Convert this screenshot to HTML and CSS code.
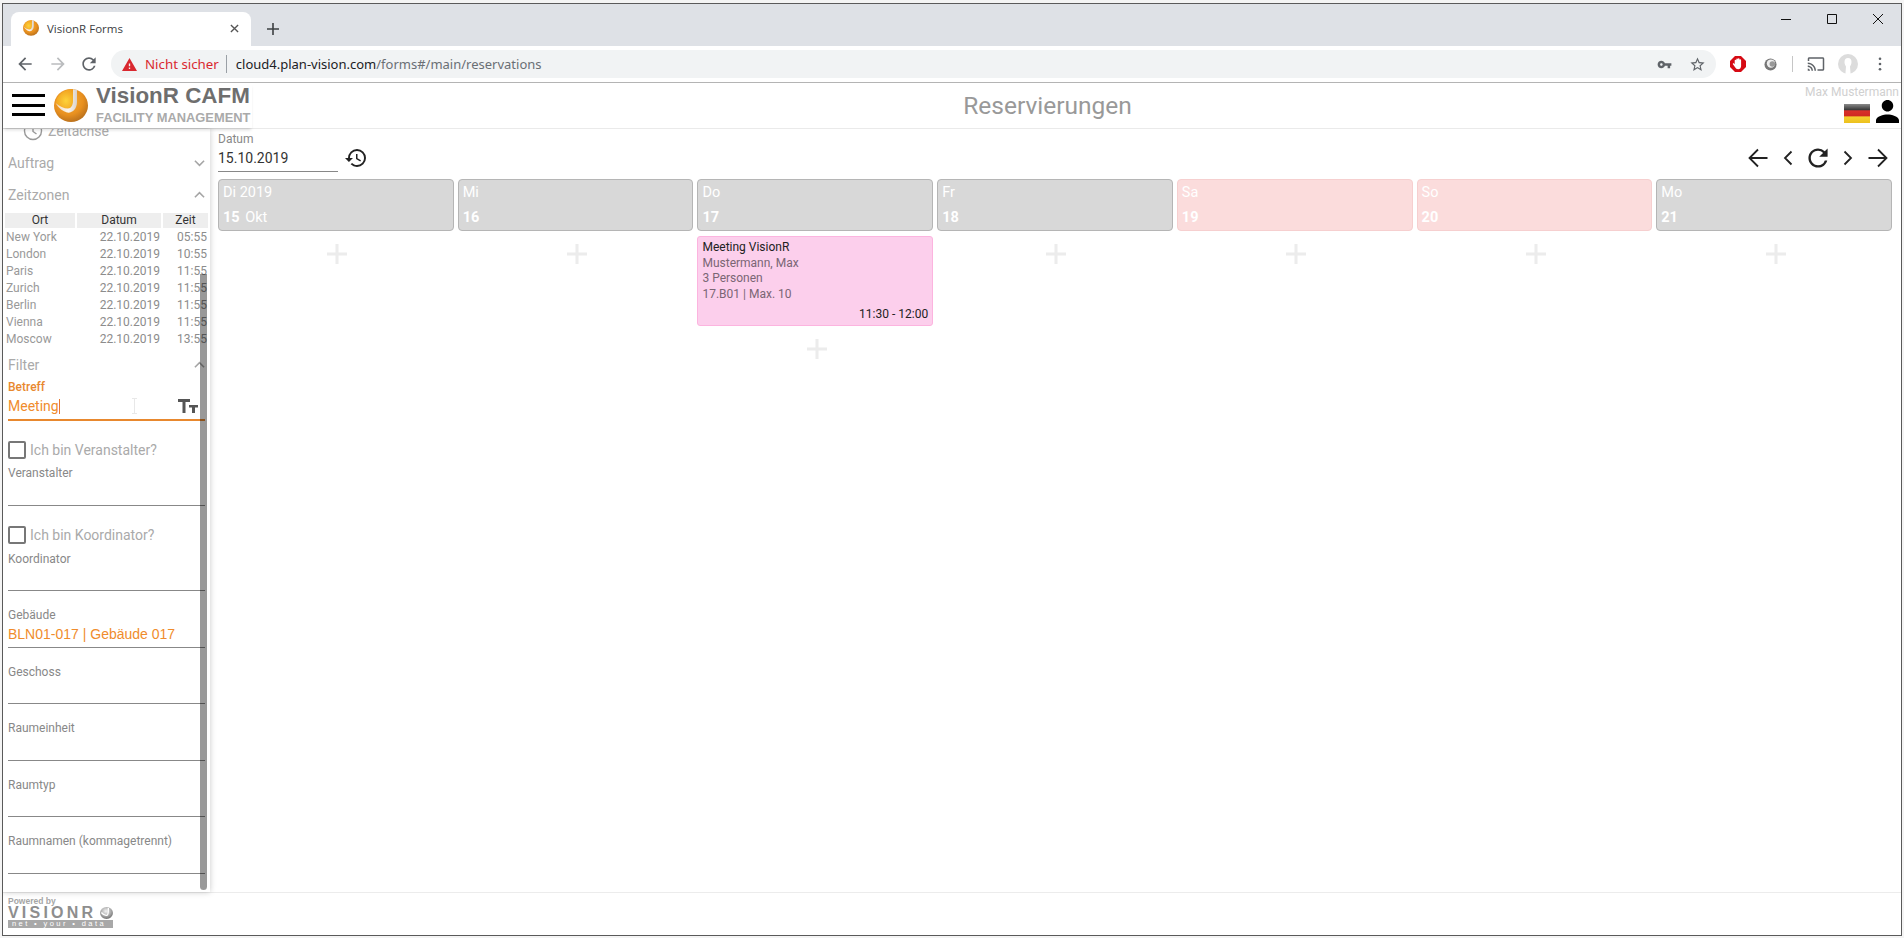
FILE: index.html
```html
<!DOCTYPE html>
<html lang="de">
<head>
<meta charset="utf-8">
<title>VisionR Forms</title>
<link rel="stylesheet" href="styles.css">
</head>
<body>
<svg class="defs" aria-hidden="true">
  <defs>
    <radialGradient id="ball" cx="42%" cy="35%" r="72%">
      <stop offset="0" stop-color="#f7b03a"/>
      <stop offset=".6" stop-color="#e8901f"/>
      <stop offset="1" stop-color="#b06a1c"/>
    </radialGradient>
    <radialGradient id="wedge" cx="60%" cy="60%" r="70%">
      <stop offset="0" stop-color="#fdd23a"/>
      <stop offset="1" stop-color="#f09a1c"/>
    </radialGradient>
    <linearGradient id="swoosh" x1="0" y1="0" x2="1" y2="0">
      <stop offset="0" stop-color="#f3d9b8"/>
      <stop offset=".6" stop-color="#fbf6ef"/>
      <stop offset="1" stop-color="#d9d2cc"/>
    </linearGradient>
    <radialGradient id="grayball" cx="45%" cy="35%" r="70%">
      <stop offset="0" stop-color="#f2f2f2"/>
      <stop offset=".6" stop-color="#a5a5a5"/>
      <stop offset="1" stop-color="#666"/>
    </radialGradient>
    <linearGradient id="flag" x1="0" y1="0" x2="0" y2="1">
      <stop offset="0" stop-color="#8a8a8a"/>
      <stop offset=".3" stop-color="#3a3a3a"/>
      <stop offset=".36" stop-color="#d9302a"/>
      <stop offset=".62" stop-color="#cf2a22"/>
      <stop offset=".68" stop-color="#f5cf2e"/>
      <stop offset="1" stop-color="#ecc01e"/>
    </linearGradient>
    <symbol id="logo" viewBox="0 0 34 33">
      <ellipse cx="17" cy="16.500" rx="17" ry="16.500" fill="url(#ball)"/>
      <path d="M19 .2C10 0 3 6 1.500 14c4 3.500 8.500 5.500 12.500 5.500 3 0 5-3.500 5-7.500z" fill="url(#wedge)"/>
      <path d="M19 .2L23 .8V13c0 7-5 11.500-10 10.500C9 22.500 5 19.500 1.500 14c4 3.500 8.500 5.500 12.500 5.500 3 0 5-3.500 5-7.500z" fill="url(#swoosh)"/>
    </symbol>
  </defs>
</svg>
<div class="frame">
  <div class="tabstrip">
    <div class="tab">
      <svg class="favicon"><use href="#logo"/></svg>
      <span class="tab-title">VisionR Forms</span>
      <svg class="tab-close" viewBox="0 0 10 10"><path d="M1 1l8 8M9 1l-8 8"/></svg>
    </div>
    <svg class="newtab" viewBox="0 0 12 12"><path d="M6 0v12M0 6h12"/></svg>
    <div class="winctrls">
      <svg class="win" viewBox="0 0 12 12"><path d="M1 6.500h10"/></svg>
      <svg class="win" viewBox="0 0 12 12"><path d="M1.500 1.500h9v9h-9z"/></svg>
      <svg class="win" viewBox="0 0 12 12"><path d="M1 1l10 10M11 1L1 11"/></svg>
    </div>
  </div>
  <div class="toolbar">
    <svg class="tb tb-dark" viewBox="0 0 24 24"><path d="M20 11H7.830l5.590-5.590L12 4l-8 8 8 8 1.410-1.410L7.830 13H20v-2z"/></svg>
    <svg class="tb tb-light" viewBox="0 0 24 24"><path d="M12 4l-1.410 1.410L16.170 11H4v2h12.170l-5.580 5.590L12 20l8-8z"/></svg>
    <svg class="tb tb-dark tb-reload" viewBox="0 0 24 24"><path d="M17.650 6.350A7.958 7.958 0 0 0 12 4c-4.420 0-7.990 3.580-7.990 8s3.570 8 7.990 8c3.730 0 6.840-2.550 7.730-6h-2.080A5.990 5.990 0 0 1 12 18c-3.310 0-6-2.690-6-6s2.690-6 6-6c1.660 0 3.140.690 4.220 1.780L13 11h7V4l-2.350 2.350z"/></svg>
    <div class="omnibox">
      <svg class="warn" viewBox="1 2 22 19"><path d="M1 21h22L12 2 1 21zm12-3h-2v-2h2v2zm0-4h-2v-4h2v4z"/></svg>
      <span class="notsecure">Nicht sicher</span>
      <span class="omni-sep"></span>
      <span class="url"><span class="url-host">cloud4.plan-vision.com</span>/forms#/main/reservations</span>
      <svg class="omni-key" viewBox="0 0 24 24"><path d="M12.650 10C11.830 7.670 9.610 6 7 6c-3.310 0-6 2.690-6 6s2.690 6 6 6c2.610 0 4.830-1.670 5.650-4H17v4h4v-4h2v-4H12.650zM7 14c-1.100 0-2-.9-2-2s.9-2 2-2 2 .9 2 2-.9 2-2 2z"/></svg>
      <svg class="omni-star" viewBox="0 0 24 24"><path d="M22 9.240l-7.190-.62L12 2 9.190 8.630 2 9.240l5.460 4.730L5.820 21 12 17.270 18.180 21l-1.630-7.030L22 9.240zM12 15.400l-3.760 2.270 1-4.280-3.320-2.880 4.380-.38L12 6.100l1.710 4.040 4.380.38-3.320 2.880 1 4.280L12 15.400z"/></svg>
    </div>
    <svg class="ext-block" viewBox="0 0 16 16">
      <path d="M5 0h6l5 5v6l-5 5H5l-5-5V5z" fill="#d60b14"/>
      <path d="M4.700 4.500a.8.800 0 0 1 1.600 0V3.300a.8.800 0 0 1 1.600 0v-.3a.8.800 0 0 1 1.600 0v1a.8.800 0 0 1 1.600 0v6c0 2-1.300 3.300-3 3.300-1.500 0-2.300-.7-3-2L2.900 8.300c-.4-.8.600-1.400 1.200-.8l.6.800z" fill="#fff"/>
    </svg>
    <svg class="ext-ball" viewBox="0 0 14 14"><circle cx="7" cy="7" r="6.500" fill="#777"/><circle cx="7.500" cy="6" r="4.500" fill="#eee"/><circle cx="9" cy="6.500" r="3" fill="#999"/></svg>
    <span class="tb-sep"></span>
    <svg class="cast" viewBox="0 0 24 24"><path d="M21 3H3c-1.100 0-2 .9-2 2v3h2V5h18v14h-7v2h7c1.100 0 2-.9 2-2V5c0-1.100-.9-2-2-2zM1 18v3h3c0-1.660-1.340-3-3-3zm0-4v2c2.760 0 5 2.240 5 5h2c0-3.870-3.130-7-7-7zm0-4v2c4.970 0 9 4.030 9 9h2c0-6.080-4.930-11-11-11z"/></svg>
    <svg class="avatar" viewBox="0 0 20 20"><circle cx="10" cy="10" r="10" fill="#dcdcdc"/><path d="M6.500 8a3.500 4 0 0 1 7 0c0 2-1 3.500-1.500 4.500 0 1.500.5 4 .5 7.500h-5c0-3.500.5-6 .5-7.500C7.500 11.500 6.500 10 6.500 8z" fill="#fff"/></svg>
    <svg class="dots" viewBox="0 0 4 16"><circle cx="2" cy="2" r="1.500"/><circle cx="2" cy="8" r="1.500"/><circle cx="2" cy="14" r="1.500"/></svg>
  </div>

  <header class="apphead">
    <div class="brand">
      <div class="burger"><span></span><span></span><span></span></div>
      <svg class="brand-logo"><use href="#logo"/></svg>
      <div class="brand-text">
        <div class="brand-name">VisionR CAFM</div>
        <div class="brand-sub">FACILITY MANAGEMENT</div>
      </div>
    </div>
    <div class="page-title">Reservierungen</div>
    <div class="user">
      <div class="user-name">Max Mustermann</div>
      <div class="user-icons">
        <svg class="flag" viewBox="0 0 26 19"><rect width="26" height="19" fill="url(#flag)"/></svg>
        <svg class="person" viewBox="4 4 16 16" preserveAspectRatio="none"><path d="M12 12c2.210 0 4-1.790 4-4s-1.790-4-4-4-4 1.790-4 4 1.790 4 4 4zm0 2c-2.670 0-8 1.340-8 4v2h16v-2c0-2.660-5.330-4-8-4z"/></svg>
      </div>
    </div>
  </header>

  <div class="main">
    <aside class="side">
      <div class="timeline">
        <svg class="clock" viewBox="0 0 20 20"><circle cx="10" cy="10" r="8.500"/><path d="M10 5v5.500l3.500 2.500"/></svg>
        <span>Zeitachse</span>
      </div>
      <div class="sec-head"><span>Auftrag</span><svg class="chev" viewBox="0 0 12 8"><path d="M1 1.500l5 5 5-5"/></svg></div>
      <div class="sec-head"><span>Zeitzonen</span><svg class="chev" viewBox="0 0 12 8"><path d="M1 6.500l5-5 5 5"/></svg></div>
      <div class="tz">
        <div class="tz-h">Ort</div><div class="tz-h">Datum</div><div class="tz-h">Zeit</div>
        <div class="tz-c">New York</div><div class="tz-d">22.10.2019</div><div class="tz-t">05:55</div>
        <div class="tz-c">London</div><div class="tz-d">22.10.2019</div><div class="tz-t">10:55</div>
        <div class="tz-c">Paris</div><div class="tz-d">22.10.2019</div><div class="tz-t">11:55</div>
        <div class="tz-c">Zurich</div><div class="tz-d">22.10.2019</div><div class="tz-t">11:55</div>
        <div class="tz-c">Berlin</div><div class="tz-d">22.10.2019</div><div class="tz-t">11:55</div>
        <div class="tz-c">Vienna</div><div class="tz-d">22.10.2019</div><div class="tz-t">11:55</div>
        <div class="tz-c">Moscow</div><div class="tz-d">22.10.2019</div><div class="tz-t">13:55</div>
      </div>
      <div class="sec-head"><span>Filter</span><svg class="chev" viewBox="0 0 12 8"><path d="M1 6.500l5-5 5 5"/></svg></div>
      <div class="active-field">
        <div class="active-label">Betreff</div>
        <div class="active-value"><span>Meeting</span><i class="caret"></i>
          <svg class="ibeam" viewBox="0 0 7 16"><path d="M1 .5h5M3.500.5v15M1 15.500h5"/></svg>
          <svg class="tt" viewBox="0 0 20 14"><path d="M0 0h12v3H7.500v11h-3V3H0zM11 6h9v2.500h-3V14h-3V8.500h-3z"/></svg>
        </div>
      </div>
      <label class="check"><span class="box"></span><span>Ich bin Veranstalter?</span></label>
      <div class="field field-first"><div class="f-label">Veranstalter</div><div class="f-value"></div></div>
      <label class="check"><span class="box"></span><span>Ich bin Koordinator?</span></label>
      <div class="field field-second"><div class="f-label">Koordinator</div><div class="f-value"></div></div>
      <div class="field"><div class="f-label">Gebäude</div><div class="f-value f-value-tall f-filled">BLN01-017 | Gebäude 017</div></div>
      <div class="field"><div class="f-label">Geschoss</div><div class="f-value"></div></div>
      <div class="field"><div class="f-label">Raumeinheit</div><div class="f-value f-value-tall"></div></div>
      <div class="field"><div class="f-label">Raumtyp</div><div class="f-value"></div></div>
      <div class="field"><div class="f-label">Raumnamen (kommagetrennt)</div><div class="f-value f-value-tall"></div></div>
      <div class="scrollthumb"></div>
    </aside>

    <section class="cal">
      <div class="cal-top">
        <div class="date-field">
          <div class="date-label">Datum</div>
          <div class="date-value">15.10.2019</div>
        </div>
        <svg class="history" viewBox="1 3 21 18"><path d="M13 3a9 9 0 0 0-9 9H1l3.890 3.890.07.14L9 12H6c0-3.870 3.130-7 7-7s7 3.130 7 7-3.130 7-7 7c-1.930 0-3.680-.79-4.940-2.060l-1.420 1.420A8.954 8.954 0 0 0 13 21a9 9 0 0 0 0-18zm-1 5v5l4.280 2.540.72-1.210-3.500-2.080V8H12z"/></svg>
        <div class="cal-nav">
          <svg class="nav-a" viewBox="0 0 20 20"><path d="M19.500 10H1.500M10 1.500L1.500 10l8.500 8.500"/></svg>
          <svg class="nav-c" viewBox="0 0 10 16"><path d="M8.500 1.500L2 8l6.500 6.500"/></svg>
          <svg class="nav-r" viewBox="4 2 16 20"><path d="M17.650 6.350A7.958 7.958 0 0 0 12 4c-4.420 0-7.990 3.580-7.990 8s3.570 8 7.990 8c3.730 0 6.840-2.550 7.730-6h-2.080A5.990 5.990 0 0 1 12 18c-3.310 0-6-2.690-6-6s2.690-6 6-6c1.660 0 3.140.690 4.220 1.780L13 11h7V4l-2.350 2.350z"/></svg>
          <svg class="nav-c" viewBox="0 0 10 16"><path d="M1.500 1.500L8 8l-6.500 6.500"/></svg>
          <svg class="nav-a" viewBox="0 0 20 20"><path d="M.5 10h18M10 1.500l8.500 8.500-8.500 8.500"/></svg>
        </div>
      </div>
      <div class="days">
        <div class="day">
          <div class="day-head"><div class="dh-top">Di 2019</div><div class="dh-bot"><b>15</b> <span>Okt</span></div></div>
          <div class="add"><svg class="plus" viewBox="0 0 20 20"><path d="M10 0v20M0 10h20"/></svg></div>
        </div>
        <div class="day">
          <div class="day-head"><div class="dh-top">Mi</div><div class="dh-bot"><b>16</b></div></div>
          <div class="add"><svg class="plus" viewBox="0 0 20 20"><path d="M10 0v20M0 10h20"/></svg></div>
        </div>
        <div class="day">
          <div class="day-head"><div class="dh-top">Do</div><div class="dh-bot"><b>17</b></div></div>
          <div class="event">
            <div class="ev-title">Meeting VisionR</div>
            <div class="ev-line">Mustermann, Max</div>
            <div class="ev-line">3 Personen</div>
            <div class="ev-line">17.B01 | Max. 10</div>
            <div class="ev-time">11:30 - 12:00</div>
          </div>
          <div class="add"><svg class="plus" viewBox="0 0 20 20"><path d="M10 0v20M0 10h20"/></svg></div>
        </div>
        <div class="day">
          <div class="day-head"><div class="dh-top">Fr</div><div class="dh-bot"><b>18</b></div></div>
          <div class="add"><svg class="plus" viewBox="0 0 20 20"><path d="M10 0v20M0 10h20"/></svg></div>
        </div>
        <div class="day">
          <div class="day-head weekend"><div class="dh-top">Sa</div><div class="dh-bot"><b>19</b></div></div>
          <div class="add"><svg class="plus" viewBox="0 0 20 20"><path d="M10 0v20M0 10h20"/></svg></div>
        </div>
        <div class="day">
          <div class="day-head weekend"><div class="dh-top">So</div><div class="dh-bot"><b>20</b></div></div>
          <div class="add"><svg class="plus" viewBox="0 0 20 20"><path d="M10 0v20M0 10h20"/></svg></div>
        </div>
        <div class="day">
          <div class="day-head"><div class="dh-top">Mo</div><div class="dh-bot"><b>21</b></div></div>
          <div class="add"><svg class="plus" viewBox="0 0 20 20"><path d="M10 0v20M0 10h20"/></svg></div>
        </div>
      </div>
    </section>
  </div>

  <footer class="foot">
    <div class="powered">
      <div class="pw-by">Powered by</div>
      <div class="pw-name"><span>VISIONR</span><svg class="pw-ball" viewBox="0 0 14 13"><ellipse cx="7" cy="6.500" rx="7" ry="6.500" fill="url(#grayball)"/><path d="M1.500 6c2 2.500 4 3.500 6 3C9 9 9 6 9 1" fill="none" stroke="#fff" stroke-width="1.500"/></svg></div>
      <div class="pw-bar">net • your • data</div>
    </div>
  </footer>
</div>
</body>
</html>
```
FILE: styles.css
```css
* { box-sizing: border-box; }
html, body { margin: 0; padding: 0; height: 938px; overflow: hidden; background: #f4f4f4; }
body { font-family: Roboto, "Liberation Sans", sans-serif; }
.defs { position: absolute; width: 0; height: 0; }

.frame {
  margin: 3px 2px 0;
  width: 1900px;
  height: 933px;
  border: 1px solid #5a5a5a;
  background: #fff;
  display: flex;
  flex-direction: column;
  overflow: hidden;
}

/* browser chrome */
.tabstrip {
  height: 42px;
  flex: none;
  background: #dee1e6;
  display: flex;
  align-items: flex-end;
  padding-left: 8px;
}
.tab {
  width: 240px;
  height: 34px;
  background: #fff;
  border-radius: 8px 8px 0 0;
  display: flex;
  align-items: center;
  padding: 0 12px 2px 12px;
}
.favicon { width: 16px; height: 16px; flex: none; }
.tab-title { margin-left: 8px; font: 11.5px "Open Sans", sans-serif; color: #3c4043; flex: 1; white-space: nowrap; }
.tab-close { width: 9px; height: 9px; fill: none; stroke: #555; stroke-width: 1.5; }
.newtab { width: 12px; height: 12px; margin: 0 0 11px 16px; fill: none; stroke: #3c4043; stroke-width: 1.6; }
.winctrls { margin-left: auto; align-self: flex-start; display: flex; gap: 34px; padding: 9px 17px 0 0; }
.win { width: 12px; height: 12px; fill: none; stroke: #111; stroke-width: 1; }

.toolbar {
  height: 37px;
  flex: none;
  background: #fff;
  border-bottom: 1px solid #b4b4b4;
  display: flex;
  align-items: center;
  padding: 0 0 0 12px;
}
.tb { width: 20px; height: 20px; margin-right: 13px; flex: none; }
.tb-dark { fill: #5f6368; }
.tb-light { fill: #babcbe; }
.tb-reload { margin-left: -2px; margin-right: 15px; }
.omnibox {
  width: 1605px;
  height: 28px;
  margin-left: -3px;
  background: #f1f3f4;
  border-radius: 14px;
  display: flex;
  align-items: center;
  padding-left: 11px;
  font: 13px "Noto Sans", sans-serif;
  flex: none;
}
.warn { width: 15px; height: 13px; fill: #d9282f; flex: none; }
.notsecure { margin-left: 8px; color: #d9282f; font-size: 13.3px; }
.omni-sep { width: 1px; height: 18px; background: #9aa0a6; margin: 0 9px 0 7px; }
.url { color: #6a6f74; }
.url-host { color: #202124; }
.omni-key { width: 15px; height: 15px; fill: #5f6368; margin-left: auto; }
.omni-star { width: 17px; height: 17px; fill: #5f6368; margin: 0 10px 0 17px; }
.ext-block { width: 16px; height: 16px; margin-left: 14px; flex: none; }
.ext-ball { width: 13px; height: 13px; margin-left: 18px; flex: none; }
.tb-sep { width: 1px; height: 16px; background: #c6c6c6; margin-left: 15px; }
.cast { width: 18px; height: 18px; fill: #5f6368; margin-left: 14px; flex: none; }
.avatar { width: 20px; height: 20px; margin-left: 13px; flex: none; }
.dots { width: 4px; height: 14px; fill: #5f6368; margin-left: 20px; flex: none; }

/* application header */
.apphead {
  height: 46px;
  flex: none;
  display: flex;
  position: relative;
  border-bottom: 1px solid #eaeaea;
  background: #fff;
}
.brand {
  width: 249px;
  height: 45px;
  flex: none;
  display: flex;
  align-items: center;
  background: #fff;
  box-shadow: 0 3px 3px -1px rgba(0,0,0,.14);
  padding-left: 9px;
  z-index: 3;
}
.burger { width: 33px; height: 22px; display: flex; flex-direction: column; justify-content: space-between; flex: none; margin-top: -1px; }
.burger span { display: block; height: 3px; background: #000; }
.brand-logo { width: 34px; height: 33px; margin-left: 9px; flex: none; }
.brand-text { margin-left: 8px; color: #6e6e6e; font-family: "Liberation Sans", sans-serif; font-weight: 700; white-space: nowrap; }
.brand-name { font-size: 22.4px; line-height: 24px; margin-top: -3px; }
.brand-sub { font-size: 12.9px; line-height: 13px; color: #aaa; margin-top: 3px; }
.page-title {
  flex: 1;
  text-align: center;
  font: 24.5px/46px Roboto, sans-serif;
  color: #999;
  padding-left: 42px;
}
.user { width: 100px; flex: none; display: flex; flex-direction: column; align-items: flex-end; padding-right: 2px; }
.user-name { font-size: 12px; line-height: 15px; color: #d0d0d0; margin-top: 2px; white-space: nowrap; }
.user-icons { display: flex; align-items: flex-end; gap: 6px; }
.flag { width: 26px; height: 19px; }
.person { width: 23px; height: 23px; fill: #000; }

/* body */
.main { flex: 1; display: flex; min-height: 0; }
.side {
  width: 207px;
  flex: none;
  position: relative;
  background: #fff;
  padding: 0 5px;
  overflow: hidden;
  box-shadow: 0 0 6px rgba(0,0,0,.22);
  z-index: 2;
}
.timeline {
  height: 25px;
  margin-top: -8px;
  padding: 0 0 5px 15px;
  display: flex;
  align-items: center;
  font-size: 14px;
  color: #aaa;
  gap: 5px;
}
.clock { width: 20px; height: 20px; fill: none; stroke: #999; stroke-width: 1.4; }
.sec-head {
  height: 30px;
  margin-top: 2px;
  display: flex;
  align-items: center;
  justify-content: space-between;
  font-size: 14px;
  color: #aaa;
}
.chev { width: 11px; height: 8px; fill: none; stroke: #a5a5a5; stroke-width: 1.7; }
.tz {
  display: grid;
  grid-template-columns: 70px 84px 45px;
  grid-template-rows: 16px;
  grid-auto-rows: 17px;
  column-gap: 2px;
  margin: 3px -3px 0;
  font-size: 12px;
  line-height: 17px;
  color: #8c8c8c;
}
.tz-h { height: 15px; line-height: 15px; background: #eee; color: #333; text-align: center; }
.tz-c { padding-left: 1px; color: #999; white-space: nowrap; }
.tz-d { text-align: right; padding-right: 1px; }
.tz-t { text-align: right; padding-right: 1px; }
.active-field { height: 41px; }
.active-label { font-size: 12px; line-height: 14px; color: #e8882e; font-weight: 500; }
.active-value {
  height: 25px;
  margin-top: 2px;
  border-bottom: 2px solid #e8882e;
  font-size: 14px;
  line-height: 20px;
  color: #f08c2c;
  display: flex;
  align-items: flex-start;
}
.caret { width: 1px; height: 15px; background: #e8782e; margin-top: 3px; }
.ibeam { width: 7px; height: 16px; margin: 2px 0 0 71px; fill: none; stroke: #e8e8e8; stroke-width: 1; }
.tt { width: 20px; height: 14px; margin: 3px 7px 0 auto; fill: #555; }
.check {
  display: flex;
  align-items: center;
  height: 20px;
  margin-top: 19px;
  font-size: 14px;
  color: #aaa;
  gap: 4px;
}
.box { width: 18px; height: 18px; border: 2px solid #777; border-radius: 2px; flex: none; }
.field { margin-top: 17px; }
.field-first { margin-top: 6px; }
.field-second { margin-top: 7px; }
.f-label { font-size: 12px; line-height: 14px; color: #888; white-space: nowrap; }
.f-value {
  height: 25px;
  border-bottom: 1px solid #888;
  font: 14px/25px "Liberation Sans", sans-serif;
}
.f-value-tall { height: 26px; }
.field-first .f-value { height: 26px; }
.f-filled { color: #f08c2c; white-space: nowrap; }
.scrollthumb {
  position: absolute;
  left: 197px;
  top: 145px;
  width: 7px;
  height: 616px;
  background: rgba(0,0,0,.4);
  border-radius: 0 0 4px 4px;
}

/* calendar */
.cal { flex: 1; min-width: 0; padding: 0 9px 0 8px; }
.cal-top { height: 50px; display: flex; align-items: flex-start; }
.date-field { width: 120px; height: 40px; margin-top: 3px; border-bottom: 1px solid #888; }
.date-label { font-size: 12px; line-height: 14px; color: #888; }
.date-value { font-size: 14px; line-height: 18px; margin-top: 3px; color: #333; }
.history { width: 21px; height: 18px; margin: 20px 0 0 7px; fill: #222; }
.cal-nav { margin-left: auto; display: flex; align-items: center; height: 20px; margin-top: 19px; padding-right: 4px; gap: 15px; }
.nav-a { width: 20px; height: 20px; fill: none; stroke: #222; stroke-width: 1.8; }
.nav-c { width: 10px; height: 16px; fill: none; stroke: #222; stroke-width: 1.8; }
.nav-r { width: 20px; height: 24px; fill: #222; }
.days { display: grid; grid-template-columns: repeat(7, 1fr); column-gap: 4px; }
.day { min-width: 0; }
.day-head {
  height: 52px;
  background: #d8d8d8;
  border: 1px solid #b5b5b5;
  border-radius: 4px;
  color: #fff;
  padding: 1px 4px 0;
  font-size: 14.5px;
}
.day-head.weekend { background: #fbdcdc; border-color: #f6cfcf; }
.dh-top { line-height: 24px; }
.dh-bot { line-height: 26px; }
.dh-bot b { font-weight: 700; margin-right: 2px; }
.add { height: 46px; display: flex; align-items: center; justify-content: center; padding-left: 3px; }
.plus { width: 20px; height: 20px; fill: none; stroke: #ececec; stroke-width: 3; }
.event {
  margin-top: 5px;
  height: 90px;
  background: #fccfec;
  border: 1px solid #fcb4df;
  border-radius: 3px;
  padding: 3px 4px 0 4px;
  font-size: 12px;
  line-height: 15.5px;
  color: #7a6674;
}
.ev-title { color: #222; }
.ev-time { color: #222; text-align: right; margin-top: 5px; }

/* footer */
.foot { flex: none; height: 43px; border-top: 1px solid #ececec; background: #fff; padding: 4px 0 0 5px; }
.powered { width: 105px; font-family: "Liberation Sans", sans-serif; color: #8e8e8e; }
.pw-by { font-size: 8.5px; line-height: 9px; font-weight: 700; color: #a5a5a5; }
.pw-name { display: flex; align-items: center; justify-content: space-between; height: 14px; font-size: 16px; line-height: 14px; font-weight: 700; letter-spacing: 3.2px; }
.pw-ball { width: 13px; height: 12px; }
.pw-bar { height: 8px; background: #a8a8a8; color: #fff; font-size: 7.5px; line-height: 8px; letter-spacing: 2.4px; padding-left: 4px; white-space: nowrap; overflow: hidden; }
```
